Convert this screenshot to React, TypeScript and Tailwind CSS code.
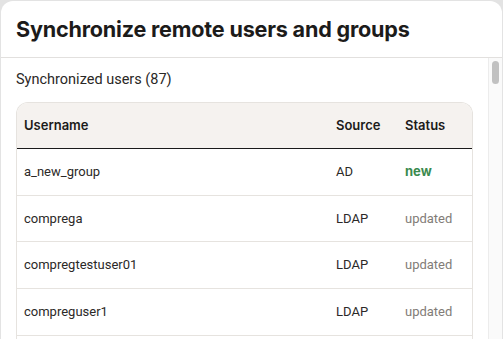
import React from "react";

type Row = { username: string; source: string; status: "new" | "updated" };

const rows: Row[] = [
  { username: "a_new_group", source: "AD", status: "new" },
  { username: "comprega", source: "LDAP", status: "updated" },
  { username: "compregtestuser01", source: "LDAP", status: "updated" },
  { username: "compreguser1", source: "LDAP", status: "updated" },
];

export default function App() {
  return (
    <div className="h-[339px] w-[503px] overflow-hidden bg-[#e3e3e3] px-[1px] pt-[1px]">
      <div className="flex h-[400px] flex-col rounded-t-[12px] bg-white">
        {/* Header */}
        <div className="flex h-[57px] shrink-0 items-center border-b border-[#e2e0de] px-[15px]">
          <h1 className="font-['Inter',sans-serif] text-[21.6px] font-bold tracking-[-0.2px] text-[#1c1b1a]">
            Synchronize remote users and groups
          </h1>
        </div>

        {/* Body */}
        <div className="flex min-h-0 flex-1">
          <div className="flex-1 px-[15px] pt-[13px] font-['Roboto',sans-serif]">
            <p className="h-[18px] text-[14.5px] leading-[18px] text-[#2a2826]">Synchronized users (87)</p>

            <div className="mt-[13px] overflow-hidden rounded-t-[12px] border border-b-0 border-[#e6e3df]">
              <div className="grid h-[46px] grid-cols-[1fr_69px_75px] items-center border-b border-[#1a1a1a] bg-[#f5f2ef] font-['Inter',sans-serif] text-[13px] font-semibold text-[#1c1b1a]">
                <div className="pl-[7px]">Username</div>
                <div className="pl-[8px]">Source</div>
                <div className="pl-[8px]">Status</div>
              </div>
              {rows.map((r) => (
                <div
                  key={r.username}
                  className="grid h-[46.7px] grid-cols-[1fr_69px_75px] items-center border-b border-[#e6e3df] text-[13px] text-[#2b2927]"
                >
                  <div className="pl-[7px]">{r.username}</div>
                  <div className="pl-[8px]">{r.source}</div>
                  <div className="pl-[8px]">
                    {r.status === "new" ? (
                      <span className="font-['Inter',sans-serif] font-bold text-[#3b8a4e]">new</span>
                    ) : (
                      <span className="text-[#827c77]">updated</span>
                    )}
                  </div>
                </div>
              ))}
              <div className="h-[46px]" />
            </div>
          </div>

          {/* Scrollbar */}
          <div className="relative w-[14px] shrink-0 border-l border-[#ececec] bg-[#fafafa]">
            <div className="absolute left-[3px] top-[3px] h-[23px] w-[7px] rounded-full bg-[#c1c1c1]" />
          </div>
        </div>
      </div>
    </div>
  );
}
